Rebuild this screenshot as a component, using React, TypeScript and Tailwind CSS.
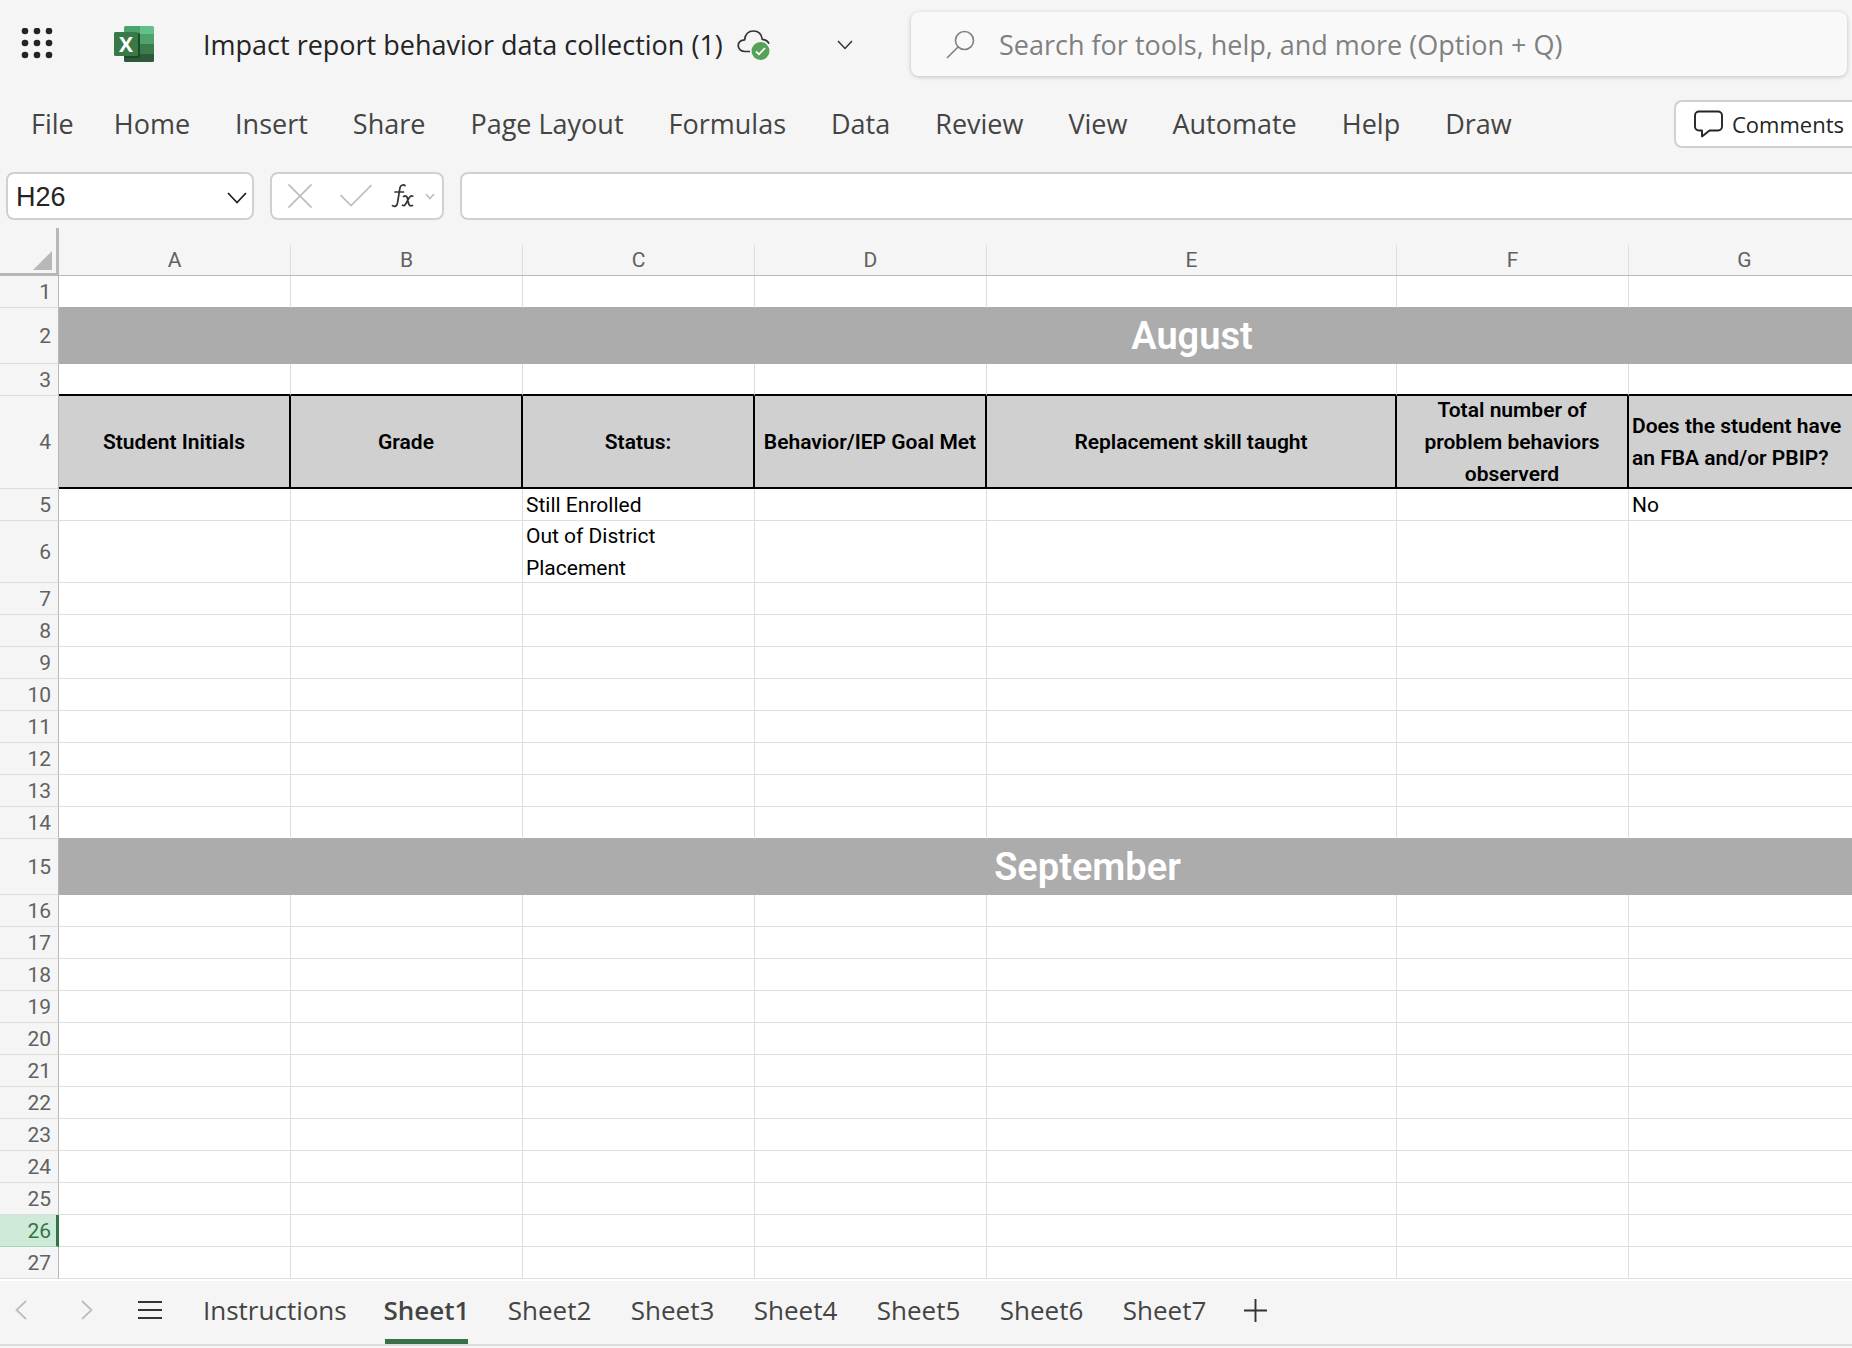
import React from "react";

const UI = "font-['Open_Sans','Noto_Sans',sans-serif]";
const CELL = "font-[Roboto,'Noto_Sans',sans-serif]";

const ribbonTabs = ["Home", "Insert", "Share", "Page Layout", "Formulas", "Data", "Review", "View", "Automate", "Help", "Draw"];
const sheets = ["Sheet1", "Sheet2", "Sheet3", "Sheet4", "Sheet5", "Sheet6", "Sheet7"];
const columns = ["A", "B", "C", "D", "E", "F", "G"];
const headings = [
  "Student Initials",
  "Grade",
  "Status:",
  "Behavior/IEP Goal Met",
  "Replacement skill taught",
  "Total number of problem behaviors observerd",
  "Does the student have an FBA and/or PBIP?",
];
const values: Record<string, string> = {
  "5C": "Still Enrolled",
  "5G": "No",
  "6C": "Out of District Placement",
};

function AppLauncherIcon() {
  const pos = [4, 16, 28];
  return (
    <svg width="32" height="32" viewBox="0 0 32 32" fill="#242424" aria-hidden="true">
      {pos.map((y) => pos.map((x) => <circle key={`${x}-${y}`} cx={x} cy={y - 1} r="3.3" />))}
    </svg>
  );
}

function ExcelIcon() {
  return (
    <svg width="40" height="36" viewBox="0 0 40 36" aria-hidden="true">
      <clipPath id="book"><rect x="10" y="0" width="30" height="36" rx="1.5" /></clipPath>
      <g clipPath="url(#book)">
        <rect x="10" y="0" width="16" height="18" fill="#4ea36c" />
        <rect x="26" y="0" width="14" height="8" fill="#63c088" />
        <rect x="26" y="8" width="14" height="10" fill="#4ea36c" />
        <rect x="10" y="8" width="16" height="20" fill="#3a7d4a" />
        <rect x="26" y="18" width="14" height="10" fill="#3a7d4a" />
        <rect x="10" y="28" width="30" height="8" fill="#2d5a38" />
        <rect x="10" y="7" width="16" height="25" rx="1.5" fill="#1f4a2a" />
      </g>
      <rect x="0" y="6" width="24" height="24" rx="1.5" fill="#377a46" />
      <text x="12" y="25.500" textAnchor="middle" fontFamily="Open Sans" fontWeight="700" fontSize="21" fill="#fff">X</text>
    </svg>
  );
}

function CloudSavedIcon() {
  return (
    <svg width="34" height="32" viewBox="0 0 34 32" fill="none" aria-hidden="true">
      <path d="M13 22.5H8C4.200 22.500 1.200 20 1.200 16.600C1.200 13.200 4 11 7.600 10.800C8.200 5.500 11.500 2 16.500 2C21.500 2 24.600 5.300 25.300 10.300C28.600 10.600 31 12 32 14.800" stroke="#333" strokeWidth="1.7" />
      <circle cx="23.500" cy="22" r="9" fill="#56a158" />
      <path d="M19 22.500L22 25.300L28 19" stroke="#fff" strokeWidth="1.8" />
    </svg>
  );
}

function Chevron({ w, h, color, stroke = 1.8 }: { w: number; h: number; color: string; stroke?: number }) {
  return (
    <svg width={w} height={h} viewBox={`0 0 ${w} ${h}`} fill="none" aria-hidden="true">
      <path d={`M1 1L${w / 2} ${h - 1.5}L${w - 1} 1`} stroke={color} strokeWidth={stroke} />
    </svg>
  );
}

function SideChevron({ right = false }: { right?: boolean }) {
  return (
    <svg width="12" height="20" viewBox="0 0 12 20" fill="none" aria-hidden="true">
      <path d={right ? "M1 1L10.500 10L1 19" : "M11 1L1.500 10L11 19"} stroke="#bdbdbd" strokeWidth="1.8" />
    </svg>
  );
}

function TopBar() {
  return (
    <div className="flex h-16 items-center text-[27px] text-[#242424]">
      <button aria-label="App launcher" className="ml-[21px]"><AppLauncherIcon /></button>
      <span className="ml-[61px]"><ExcelIcon /></span>
      <h1 className="ml-[49px] w-[534px] pt-0.5 whitespace-nowrap">Impact report behavior data collection (1)</h1>
      <button aria-label="Saved to cloud" className="pt-0.5"><CloudSavedIcon /></button>
      <button aria-label="File details" className="ml-[66px] pt-0.5"><Chevron w={16} h={10} color="#333" stroke={1.5} /></button>
      <label className="mr-[5px] ml-[58px] flex h-16 min-w-0 flex-1 items-center rounded-lg bg-[#f9f9f9] pl-[35px] shadow-[0_1px_4px_rgba(0,0,0,0.22)]">
        <svg width="29" height="29" viewBox="0 0 29 29" fill="none" stroke="#808080" strokeWidth="1.600" aria-hidden="true">
          <circle cx="18.500" cy="10.500" r="9" />
          <path d="M12 17L1 28" />
        </svg>
        <input type="search" aria-label="Search" placeholder="Search for tools, help, and more (Option + Q)" className="ml-6 min-w-0 flex-1 bg-transparent pt-0.5 outline-none placeholder:text-[#808080]" />
      </label>
    </div>
  );
}

function Ribbon() {
  return (
    <nav className="mt-6 flex h-12 items-center text-[27px] text-[#444]">
      <button className="mr-10 ml-[31px]">File</button>
      <div className="flex gap-[45px] whitespace-nowrap">
        {ribbonTabs.map((t) => <button key={t}>{t}</button>)}
      </div>
      <button className="ml-auto flex h-12 w-[178px] shrink-0 items-center gap-[9px] rounded-l-lg border-2 border-r-0 border-[#d0d0d0] bg-white pl-[18px] text-[22px] text-[#242424]">
        <svg width="29" height="28" viewBox="0 0 29 28" fill="none" stroke="#242424" strokeWidth="1.900" strokeLinejoin="round" aria-hidden="true">
          <path d="M5 1.500H24C26.200 1.500 28 3.300 28 5.500V16.500C28 18.700 26.200 20.500 24 20.500H15.500L8 26.500V20.500H5C2.800 20.500 1 18.700 1 16.500V5.500C1 3.300 2.800 1.500 5 1.500Z" />
        </svg>
        Comments
      </button>
    </nav>
  );
}

function FormulaBar() {
  return (
    <div className="mt-6 flex h-12 gap-4 pl-1.5">
      <div className="flex w-[248px] items-center rounded-lg border-2 border-[#d0d0d0] bg-white pr-[5px] pl-2">
        <input aria-label="Name box" defaultValue="H26" className="min-w-0 flex-1 bg-transparent pt-0.5 font-['Liberation_Sans',sans-serif] text-[27px] text-[#242424] outline-none" />
        <button aria-label="Open name list" className="pt-1"><Chevron w={20} h={12} color="#242424" /></button>
      </div>
      <div className="flex w-[174px] items-center rounded-lg border-2 border-[#d0d0d0] bg-white pl-4">
        <button aria-label="Cancel">
          <svg width="24" height="24" viewBox="0 0 24 24" stroke="#bdbdbd" strokeWidth="1.700" aria-hidden="true"><path d="M0.500 0.500L23.500 23.500M23.500 0.500L0.500 23.500" /></svg>
        </button>
        <button aria-label="Enter" className="ml-7">
          <svg width="32" height="24" viewBox="0 0 32 24" fill="none" stroke="#bdbdbd" strokeWidth="1.700" aria-hidden="true"><path d="M0.500 11L11 21.500L31.500 1" /></svg>
        </button>
        <button aria-label="Insert function" className="ml-[19px]">
          <svg width="23" height="26" viewBox="0 0 23 26" fill="none" stroke="#333" strokeWidth="1.700" strokeLinecap="round" aria-hidden="true">
            <path d="M14 2.600C13 1.500 10 1.500 9 4.500L6.500 20C5.800 23.500 3.500 24 1.500 22.600M4 9H12.500" />
            <path d="M12.500 13.500C15 12 16 13.500 16.500 15.500L17.500 20C18 22.500 19.500 23.500 21.500 22.500M21.800 13.200C20.500 12.200 19.500 13 18 15L15 20.500C13.800 22.500 12.800 23 11.500 22.200" />
          </svg>
        </button>
        <button aria-label="More functions" className="ml-auto pr-[7px]"><Chevron w={10} h={7} color="#bdbdbd" stroke={1.6} /></button>
      </div>
      <input aria-label="Formula" className="min-w-0 flex-1 rounded-l-lg border-2 border-r-0 border-[#d0d0d0] bg-white px-3 text-[27px] outline-none" />
    </div>
  );
}

function RowNumber({ n }: { n: number }) {
  const active = n === 26;
  return (
    <th
      scope="row"
      className={
        active
          ? "border-r-3 border-b border-[#a6d8b8] border-r-[#2f7545] bg-[#d0ead9] p-0 pr-[5px] text-right leading-7 font-normal text-[#2f7545]"
          : "border-r border-b border-[#dcdcdc] border-r-[#b8b8b8] bg-[#f5f5f5] p-0 pr-[7px] text-right leading-7 font-normal text-[#616161]"
      }
    >
      {n}
    </th>
  );
}

function PlainRow({ n }: { n: number }) {
  const border = n === 3 ? "border-b-2 border-b-black" : n === 1 || n === 14 ? "border-b border-b-[#acacac]" : "border-b border-b-[#dedede]";
  return (
    <tr className={n === 6 ? "h-[62px]" : "h-8"}>
      <RowNumber n={n} />
      {[...columns, "H"].map((c) => (
        <td key={c} className={`border-r border-r-[#dedede] p-0 pl-[3px] text-left text-black ${border}`}>
          {values[n + c] ? <div className="-my-1 w-[170px]">{values[n + c]}</div> : null}
        </td>
      ))}
    </tr>
  );
}

function SheetGrid() {
  const plain = (from: number, to: number) =>
    Array.from({ length: to - from + 1 }, (_, i) => <PlainRow key={from + i} n={from + i} />);
  return (
    <main className="mt-2 flex-1 overflow-hidden bg-white">
      <table className={`w-[2116px] table-fixed border-separate border-spacing-0 text-[21px] leading-8 ${CELL}`}>
        <colgroup>
          <col className="w-[59px]" />
          <col className="w-[232px]" />
          <col className="w-[232px]" />
          <col className="w-[232px]" />
          <col className="w-[232px]" />
          <col className="w-[410px]" />
          <col className="w-[232px]" />
          <col className="w-[232px]" />
          <col />
        </colgroup>
        <thead>
          <tr className="h-12 bg-[#f5f5f5] text-[#616161]">
            <td className="border-r-3 border-b-3 border-[#b8b8b8] p-0 align-bottom">
              <svg width="19" height="19" viewBox="0 0 19 19" className="mb-[3px] ml-[33px] block" aria-hidden="true"><path d="M19 0V19H0Z" fill="#b8b8b8" /></svg>
            </td>
            {columns.map((c) => (
              <th key={c} scope="col" className="border-b border-[#b8b8b8] p-0 align-bottom font-normal">
                <div className="h-[30px] border-r border-[#dedede] leading-[30px]">{c}</div>
              </th>
            ))}
            <td className="border-b border-[#b8b8b8]" />
          </tr>
        </thead>
        <tbody>
          {plain(1, 1)}
          <tr className="h-14 bg-[#acacac]">
            <RowNumber n={2} />
            <td colSpan={4} />
            <td className="p-0 text-center text-[38px] font-semibold text-white">August</td>
            <td colSpan={3} />
          </tr>
          {plain(3, 3)}
          <tr className="h-[93px]">
            <RowNumber n={4} />
            {headings.map((h, i) => (
              <td key={h} className={`border-r-2 border-b-2 border-black bg-[#d0d0d0] p-0 font-semibold text-black ${i === 6 ? "pr-2 pl-[3px] text-left" : i === 5 ? "px-6 text-center" : "text-center"}`}>
                <div className="-my-2">{h}</div>
              </td>
            ))}
            <td className="border-b-2 border-black bg-[#d0d0d0]" />
          </tr>
          {plain(5, 14)}
          <tr className="h-14 bg-[#acacac]">
            <RowNumber n={15} />
            <td colSpan={8} className="p-0 text-center text-[38px] font-semibold text-white">September</td>
          </tr>
          {plain(16, 27)}
        </tbody>
      </table>
    </main>
  );
}

function SheetTabs() {
  return (
    <footer className="flex h-[65px] items-stretch border-b-2 border-[#dcdcdc] text-[26px] text-[#444]">
      <button aria-label="Previous sheet" className="ml-[15px] pb-[5px]"><SideChevron /></button>
      <button aria-label="Next sheet" className="ml-[54px] pb-[5px]"><SideChevron right /></button>
      <button aria-label="All sheets" className="ml-[45px] pb-[5px]">
        <svg width="24" height="20" viewBox="0 0 24 20" stroke="#333" strokeWidth="2" aria-hidden="true"><path d="M0 2H24M0 10H24M0 18H24" /></svg>
      </button>
      <button className="ml-[41px] w-[143px] pb-[5px] whitespace-nowrap">Instructions</button>
      <div className="ml-[39px] flex gap-10">
        {sheets.map((s, i) => (
          <button key={s} className={`flex w-[83px] items-center justify-center border-b-5 ${i === 0 ? "border-[#377049] font-semibold" : "border-transparent"}`}>{s}</button>
        ))}
      </div>
      <button aria-label="New sheet" className="ml-[38px] pb-[5px]">
        <svg width="23" height="23" viewBox="0 0 23 23" stroke="#333" strokeWidth="1.900" aria-hidden="true"><path d="M11.500 0V23M0 11.500H23" /></svg>
      </button>
    </footer>
  );
}

export default function App() {
  return (
    <div className={`flex min-h-screen flex-col overflow-hidden bg-[#f5f5f5] pt-3 pb-0.5 ${UI}`}>
      <TopBar />
      <Ribbon />
      <FormulaBar />
      <SheetGrid />
      <SheetTabs />
    </div>
  );
}
